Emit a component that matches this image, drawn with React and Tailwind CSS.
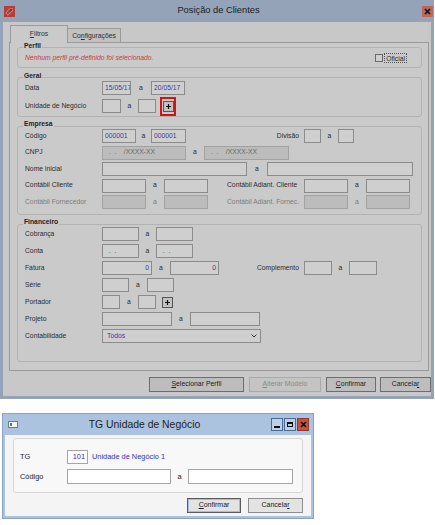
import clsx from "clsx";

function Inp({ w, children, right, dis, blue, tall }) {
  return (
    <div
      className={clsx(
        w,
        tall ? "h-[15px]" : "h-[14px]",
        "shrink-0 border flex items-center px-[2px] leading-none whitespace-pre overflow-hidden",
        dis ? "bg-[#bcbcbc] border-[#a2a2a2] text-[#686868]" : "bg-[#cfcfcf] border-[#8b8b8b]",
        right && "justify-end",
        blue && "text-[#3a3aa6]"
      )}
    >
      {children}
    </div>
  );
}

function A({ w, dis }) {
  return <div className={clsx(w, "shrink-0 text-center", dis && "text-[#7c7c7c]")}>a</div>;
}

function Row({ label, dis, children, className }) {
  return (
    <div className={clsx("flex items-center h-[14px] shrink-0", className)}>
      <div className={clsx("w-[77px] shrink-0", dis && "text-[#7c7c7c]")}>{label}</div>
      {children}
    </div>
  );
}

function Group({ title, className, titleClass, rowsClass, children }) {
  return (
    <div className={clsx("ml-[7px] w-[405px] border border-[#b3b3b3] rounded-[3px] flex flex-col pl-[7px]", className)}>
      <div className={clsx("-ml-[2px] w-fit px-[1px] h-[10px] leading-[10px] font-bold text-[#1e1e1e] bg-[#cacaca]", titleClass)}>
        {title}
      </div>
      <div className={clsx("flex flex-col", rowsClass)}>{children}</div>
    </div>
  );
}

function PlusBtn() {
  return (
    <div className="w-[11px] h-[11px] shrink-0 border border-[#555] bg-[#c2c2c2] flex items-center justify-center">
      <svg width="7" height="7" viewBox="0 0 7 7">
        <path d="M3.5 1v5M1 3.5h5" stroke="#111" strokeWidth="1.2" />
      </svg>
    </div>
  );
}

function Btn({ children, w, dis }) {
  return (
    <div
      className={clsx(
        w,
        "h-[15px] shrink-0 border flex items-center justify-center",
        dis ? "bg-[#c4c4c4] border-[#a9a9a9] text-[#8a8a8a]" : "bg-[#bdbdbd] border-[#6d6d6d] text-[#222]"
      )}
    >
      {children}
    </div>
  );
}

const CNPJ = "  .  .    /XXXX-XX";

function MainWindow() {
  return (
    <div className="w-[434px] bg-[#95a3b9] flex flex-col text-[6.75px] text-[#2a2a2a]">
      {/* title bar */}
      <div className="h-[22px] flex items-center shrink-0">
        <svg className="ml-[4px] shrink-0" width="11" height="11" viewBox="0 0 11 11">
          <rect width="11" height="11" fill="#b0403c" />
          <path d="M2 8c1-4 4-6 7-5M3 9c2-1 4-2 6-5" stroke="#e7a19a" strokeWidth="0.8" fill="none" />
          <circle cx="7" cy="4" r="1" fill="#7d1f1c" />
        </svg>
        <div className="flex-1 text-center text-[9.3px] text-[#1c1c1c]">Posição de Clientes</div>
        <div className="w-[11px] h-[11px] mr-[1px] shrink-0 bg-[#b8685c] flex items-center justify-center">
          <svg width="7" height="7" viewBox="0 0 7 7">
            <path d="M1 1l5 5M6 1L1 6" stroke="#111" strokeWidth="1.6" />
          </svg>
        </div>
      </div>

      {/* body */}
      <div className="mx-[3px] mb-[3px] bg-[#c8c8c8] flex flex-col pt-[3px] pb-[4px]">
        <div className="ml-[6px] w-[420px] flex flex-col">
          {/* tabs */}
          <div className="h-[17px] flex items-end pl-[1px]">
            <div className="h-[18px] -mb-px w-[58px] relative z-10 bg-[#cacaca] border-t border-x border-[#9a9a9a] flex justify-center pt-[3px] text-[#333]">
              <span><u>F</u>iltros</span>
            </div>
            <div className="h-[14px] w-[53px] border-t border-r border-[#9a9a9a] bg-[#c2c2c2] flex justify-center pt-[2px]">
              <span>Co<u>n</u>figurações</span>
            </div>
          </div>

          {/* panel */}
          <div className="border border-[#9a9a9a] bg-[#cacaca] flex flex-col pt-[4px] pb-[8px]">
            <Group title="Perfil" titleClass="-mt-[7px]" className="pb-[2px]">
              <div className="h-[14px] flex items-center justify-between pr-[14px]">
                <span className="italic text-[#c53d3d]">Nenhum perfil pré-definido foi selecionado.</span>
                <div className="flex items-center">
                  <div className="w-[8px] h-[8px] border border-[#6a6a6a] bg-[#d0d0d0]" />
                  <div className="ml-[1px] px-[1px] h-[10px] leading-[9px] border border-dotted border-[#555]">Oficial</div>
                </div>
              </div>
            </Group>

            <Group title="Geral" titleClass="-mt-[7px]" className="mt-[9px] pb-[3px]" rowsClass="gap-[4px]">
              <Row label="Data">
                <Inp w="w-[29px]" blue>15/05/17</Inp>
                <A w="w-[20px]" />
                <Inp w="w-[34px]" blue>20/05/17</Inp>
              </Row>
              <Row label="Unidade de Negócio">
                <Inp w="w-[19px]" />
                <A w="w-[17px]" />
                <Inp w="w-[18px]" />
                <div className="ml-[4px] w-[16px] h-[19px] shrink-0 border-2 border-[#d21414] flex items-center justify-center">
                  <PlusBtn />
                </div>
              </Row>
            </Group>

            <Group title="Empresa" titleClass="-mt-[8px]" className="mt-[9px] pb-[5px]" rowsClass="gap-[2.5px]">
              <Row label="Código">
                <Inp w="w-[34px]" blue>000001</Inp>
                <A w="w-[15px]" />
                <Inp w="w-[35px]" blue>000001</Inp>
                <div className="w-[118px] shrink-0 text-right pr-[5px]">Divisão</div>
                <Inp w="w-[17px]" />
                <A w="w-[17px]" />
                <Inp w="w-[16px]" />
              </Row>
              <Row label="CNPJ">
                <Inp w="w-[84px]" dis>{CNPJ}</Inp>
                <A w="w-[18px]" />
                <Inp w="w-[85px]" dis>{CNPJ}</Inp>
              </Row>
              <Row label="Nome inicial">
                <Inp w="w-[145px]" />
                <A w="w-[20px]" />
                <Inp w="w-[146px]" />
              </Row>
              <Row label="Contábil Cliente">
                <Inp w="w-[44px]" />
                <A w="w-[18px]" />
                <Inp w="w-[44px]" />
                <div className="ml-[19px] w-[77px] shrink-0">Contábil Adiant. Cliente</div>
                <Inp w="w-[44px]" />
                <A w="w-[18px]" />
                <Inp w="w-[44px]" />
              </Row>
              <Row label="Contábil Fornecedor" dis>
                <Inp w="w-[44px]" dis />
                <A w="w-[18px]" dis />
                <Inp w="w-[44px]" dis />
                <div className="ml-[19px] w-[77px] shrink-0 text-[#7c7c7c]">Contábil Adiant. Fornec.</div>
                <Inp w="w-[44px]" dis />
                <A w="w-[18px]" dis />
                <Inp w="w-[44px]" dis />
              </Row>
            </Group>

            <Group title="Financeiro" titleClass="-mt-[8px]" className="mt-[9px] pb-[18px]" rowsClass="gap-[3px]">
              <Row label="Cobrança">
                <Inp w="w-[37px]" />
                <A w="w-[17px]" />
                <Inp w="w-[37px]" />
              </Row>
              <Row label="Conta">
                <Inp w="w-[37px]" blue>{"  .  ."}</Inp>
                <A w="w-[17px]" />
                <Inp w="w-[37px]" blue>{"  .  ."}</Inp>
              </Row>
              <Row label="Fatura">
                <Inp w="w-[50px]" right blue>0</Inp>
                <A w="w-[18px]" />
                <Inp w="w-[49px]" right blue>0</Inp>
                <div className="w-[85px] shrink-0 text-right pr-[5px]">Complemento</div>
                <Inp w="w-[28px]" />
                <A w="w-[17px]" />
                <Inp w="w-[28px]" />
              </Row>
              <Row label="Série">
                <Inp w="w-[27px]" />
                <A w="w-[18px]" />
                <Inp w="w-[27px]" />
              </Row>
              <Row label="Portador">
                <Inp w="w-[18px]" />
                <A w="w-[18px]" />
                <Inp w="w-[18px]" />
                <div className="ml-[6px]">
                  <PlusBtn />
                </div>
              </Row>
              <Row label="Projeto">
                <Inp w="w-[70px]" />
                <A w="w-[18px]" />
                <Inp w="w-[70px]" />
              </Row>
              <Row label="Contabilidade">
                <div className="w-[159px] h-[14px] shrink-0 border border-[#8b8b8b] bg-[#cfcfcf] flex items-center justify-between pl-[4px] pr-[3px] text-[#3a3aa6]">
                  <span>Todos</span>
                  <svg width="6" height="4" viewBox="0 0 6 4">
                    <path d="M0.5 0.5L3 3L5.5 0.5" stroke="#333" strokeWidth="1" fill="none" />
                  </svg>
                </div>
              </Row>
            </Group>
          </div>
        </div>

        {/* buttons */}
        <div className="mt-[6px] flex pl-[146px] text-[6.9px]">
          <Btn w="w-[95px]"><span><u>S</u>elecionar Perfil</span></Btn>
          <div className="ml-[5px]">
            <Btn w="w-[72px]" dis><span><u>A</u>lterar Modelo</span></Btn>
          </div>
          <div className="ml-[5px]">
            <Btn w="w-[50px]"><span><u>C</u>onfirmar</span></Btn>
          </div>
          <div className="ml-[4px]">
            <Btn w="w-[51px]"><span>Cancela<u>r</u></span></Btn>
          </div>
        </div>
      </div>
    </div>
  );
}

function DInp({ w, children, right }) {
  return (
    <div className={clsx(w, "h-[15px] shrink-0 border border-[#a6a6a6] bg-white flex items-center px-[2px] text-[#2f2fbf]", right && "justify-end")}>
      {children}
    </div>
  );
}

function Dialog() {
  return (
    <div className="mt-[14px] ml-[2px] w-[312px] border border-[#8ba3c1] bg-[#abc3df] flex flex-col text-[7.4px] text-[#1a1a1a]">
      <div className="h-[21px] flex items-center shrink-0">
        <svg className="ml-[5px] shrink-0" width="10" height="7" viewBox="0 0 10 7">
          <rect x="0.5" y="0.5" width="9" height="6" fill="#f4f4f4" stroke="#6b7c8f" />
          <rect x="2" y="2" width="2" height="3" fill="#2f8f7a" />
        </svg>
        <div className="flex-1 text-center text-[10.4px] text-[#1e1e1e]">TG Unidade de Negócio</div>
        <div className="flex gap-[1px] mr-[4px] shrink-0">
          <div className="w-[12px] h-[13px] border border-[#4a6a92] bg-[#bcd0e8] flex items-center justify-center">
            <div className="w-[6px] h-[2px] bg-[#111] mt-[4px]" />
          </div>
          <div className="w-[12px] h-[13px] border border-[#4a6a92] bg-[#bcd0e8] flex items-center justify-center">
            <div className="w-[6px] h-[5px] border border-[#111] border-t-2" />
          </div>
          <div className="w-[12px] h-[13px] border border-[#8a3a33] bg-[#c9503f] flex items-center justify-center">
            <svg width="7" height="7" viewBox="0 0 7 7">
              <path d="M1 1l5 5M6 1L1 6" stroke="#111" strokeWidth="1.7" />
            </svg>
          </div>
        </div>
      </div>

      <div className="mx-[2px] mb-[2px] bg-[#f4f4f4] flex flex-col pt-[3px] pb-[3px]">
        <div className="ml-[8px] w-[290px] border border-[#d6d6d6] rounded-[3px] bg-[#f8f8f8] flex flex-col pl-[6px] pt-[11px] pb-[8px] gap-[5px]">
          <div className="flex items-center h-[14px]">
            <div className="w-[47px] shrink-0">TG</div>
            <div className="w-[21px] h-[14px] shrink-0 border border-[#a6a6a6] bg-white flex items-center justify-end pr-[2px] text-[#2f2fbf]">101</div>
            <div className="ml-[4px] text-[#2f2fbf]">Unidade de Negócio 1</div>
          </div>
          <div className="flex items-center h-[15px]">
            <div className="w-[47px] shrink-0">Código</div>
            <DInp w="w-[104px]" />
            <div className="w-[17px] shrink-0 text-center">a</div>
            <DInp w="w-[105px]" />
          </div>
        </div>
        <div className="mt-[5px] flex justify-end pr-[8px] gap-[7px] text-[7px]">
          <div className="w-[54px] h-[15px] border border-[#5b5b5b] bg-[#e3e3e3] flex items-center justify-center shadow-[inset_0_0_0_1px_#9fc0df]">
            <span><u>C</u>onfirmar</span>
          </div>
          <div className="w-[55px] h-[15px] border border-[#8e8e8e] bg-[#e3e3e3] flex items-center justify-center">
            <span>Cancela<u>r</u></span>
          </div>
        </div>
      </div>
    </div>
  );
}

export default function App() {
  return (
    <div className="w-[435px] h-[525px] bg-white overflow-hidden flex flex-col font-['Liberation_Sans',Arial,sans-serif]">
      <MainWindow />
      <Dialog />
    </div>
  );
}
